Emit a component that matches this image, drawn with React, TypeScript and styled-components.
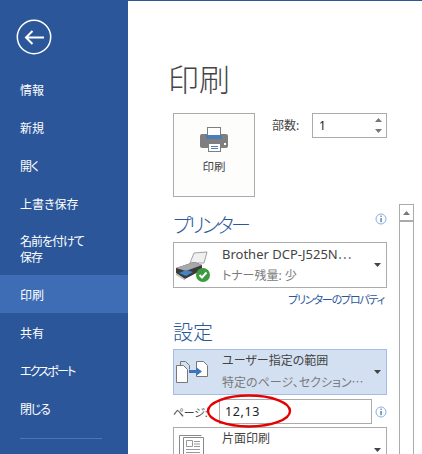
import React from "react";
import styled, { createGlobalStyle } from "styled-components";

const Global = createGlobalStyle`
    html, body { margin: 0; padding: 0; background: #fff; }
    body {
        font-family: "Noto Sans", "Noto Sans CJK JP", sans-serif;
        font-feature-settings: "palt";
    }
`;
const Page = styled.div`
    width: 422px;
    height: 454px;
    display: flex;
    overflow: hidden;
`;
const Sidebar = styled.nav`
    width: 128px;
    flex: none;
    background: #2b579a;
    color: #fff;
`;
const BackButton = styled.div`
    height: 70px;
    padding: 19px 0 0 16px;
    box-sizing: border-box;
`;
const MenuItem = styled.div<{ $active?: boolean; $tall?: boolean; $track?: number }>`
    height: ${(p) => (p.$tall ? 53 : 38)}px;
    box-sizing: border-box;
    padding: 3px 0 0 20px;
    display: flex;
    align-items: center;
    font-size: 12px;
    line-height: 16px;
    letter-spacing: ${(p) => p.$track ?? 0}px;
    background: ${(p) => (p.$active ? "#3e6db5" : "transparent")};
`;
const Divider = styled.div`
    width: 82px;
    height: 1px;
    margin: 11px 0 0 20px;
    background: #4a76b5;
`;
const Main = styled.main`
    flex: 1;
    border-top: 1px solid #2b579a;
    padding: 61px 0 0 45px;
    min-width: 0;
`;
const Title = styled.h1`
    margin: 0 0 0 -5px;
    font-size: 31px;
    font-weight: 300;
    line-height: 34px;
    color: #444;
`;
const PrintRow = styled.div`
    display: flex;
    margin-top: 17px;
`;
const PrintButton = styled.div`
    width: 82px;
    height: 84px;
    border: 1px solid #ababab;
    box-sizing: border-box;
    background-color: #fdfdfc;
    background-image: radial-gradient(#e9e9e6 0.6px, transparent 0.7px);
    background-size: 4px 4px;
    display: flex;
    flex-direction: column;
    align-items: center;
    padding-top: 12px;
    font-size: 11.5px;
    color: #444;
    gap: 5px;
`;
const CopiesLabel = styled.span`
    width: 40px;
    flex: none;
    margin: 5px 0 0 17px;
    font-size: 12px;
    line-height: 16px;
    color: #444;
`;
const CopiesInput = styled.div`
    width: 75px;
    height: 25px;
    border: 1px solid #ababab;
    box-sizing: border-box;
    padding: 0 4px 0 6px;
    display: flex;
    align-items: center;
    justify-content: space-between;
    font-size: 12px;
    color: #222;
`;
const Spinner = styled.div`
    display: flex;
    flex-direction: column;
    gap: 7px;
`;
const Columns = styled.div`
    display: flex;
    gap: 12px;
    margin-top: 7px;
`;
const Settings = styled.div`
    width: 214px;
    flex: none;
`;
const SectionHead = styled.div`
    display: flex;
    justify-content: space-between;
    align-items: flex-start;
    padding-top: 9px;
`;
const SectionTitle = styled.h2<{ $tight?: boolean }>`
    margin: 0 0 3px;
    font-size: 20px;
    font-weight: 300;
    line-height: 26px;
    letter-spacing: ${(p) => (p.$tight ? -3 : 0)}px;
    color: #2b579a;
`;
const Dropdown = styled.div<{ $selected?: boolean }>`
    height: 46px;
    border: 1px solid ${(p) => (p.$selected ? "#a3bde3" : "#ababab")};
    background: ${(p) => (p.$selected ? "#d3e0f2" : "#fff")};
    box-sizing: border-box;
    display: flex;
    align-items: center;
    padding-right: 5px;
`;
const DropdownIcon = styled.div`
    width: 47px;
    padding-left: 1px;
    flex: none;
    display: flex;
`;
const DropdownText = styled.div`
    flex: 1;
    min-width: 0;
`;
const Primary = styled.div`
    font-size: 12px;
    line-height: 22px;
    color: #444;
    white-space: nowrap;
`;
const PrinterName = styled(Primary)`
    font-size: 13px;
`;
const Secondary = styled.div`
    font-size: 12px;
    line-height: 22px;
    min-height: 22px;
    color: #7a7a7a;
    white-space: nowrap;
`;
const Link = styled.div`
    text-align: right;
    padding-right: 3px;
    margin-top: 3px;
    height: 20px;
    font-size: 11px;
    line-height: 18px;
    letter-spacing: -1.2px;
    color: #2b579a;
    white-space: nowrap;
`;
const PagesRow = styled.div`
    display: flex;
    align-items: center;
    margin: 4px 0 3px;
    height: 25px;
    position: relative;
`;
const PagesLabel = styled.span`
    width: 46px;
    flex: none;
    font-size: 11px;
    letter-spacing: -0.3px;
    color: #444;
`;
const PagesInput = styled.div`
    width: 153px;
    height: 25px;
    flex: none;
    border: 1px solid #ababab;
    box-sizing: border-box;
    padding-left: 5px;
    font-size: 12.5px;
    letter-spacing: 0.6px;
    line-height: 24px;
    color: #222;
`;
const InfoWrap = styled.div`
    margin-left: auto;
    display: flex;
`;
const Ellipse = styled.svg`
    position: absolute;
    left: 33px;
    top: -5px;
`;
const Scrollbar = styled.div`
    width: 15px;
    height: 260px;
    flex: none;
    border: 1px solid #ababab;
    border-bottom: none;
    box-sizing: border-box;
`;
const ScrollUp = styled.div`
    height: 15px;
    border-bottom: 2px solid #ababab;
    display: flex;
    justify-content: center;
    align-items: center;
`;

const Caret = () => (
    <svg width="7" height="4" viewBox="0 0 7 4">
        <path d="M0 0h7L3.5 4z" fill="#444" />
    </svg>
);
const Info = () => (
    <svg width="12" height="12" viewBox="0 0 12 12">
        <circle cx="6" cy="6" r="5" fill="#fff" stroke="#8eaede" />
        <rect x="5.4" y="2.6" width="1.3" height="1.3" fill="#3f73b8" />
        <rect x="5.4" y="5" width="1.3" height="4.2" fill="#3f73b8" />
    </svg>
);

const App = () => (
    <Page>
        <Global />
        <Sidebar>
            <BackButton>
                <svg width="37" height="37" viewBox="0 0 37 37">
                    <circle cx="18" cy="18" r="16.7" fill="none" stroke="#fff" strokeWidth="1.5" />
                    <path d="M10 18.500h18M16.500 12l-6.500 6.500 6.500 6.500" fill="none" stroke="#fff" strokeWidth="2" />
                </svg>
            </BackButton>
            <MenuItem>情報</MenuItem>
            <MenuItem>新規</MenuItem>
            <MenuItem $track={-1}>開く</MenuItem>
            <MenuItem>上書き保存</MenuItem>
            <MenuItem $tall $track={-1}>
                <div>名前を付けて<br />保存</div>
            </MenuItem>
            <MenuItem $active>印刷</MenuItem>
            <MenuItem>共有</MenuItem>
            <MenuItem $track={-1.8}>エクスポート</MenuItem>
            <MenuItem $track={-1.2}>閉じる</MenuItem>
            <Divider />
        </Sidebar>
        <Main>
            <Title>印刷</Title>
            <PrintRow>
                <PrintButton>
                    <svg width="28" height="27" viewBox="0 0 28 27">
                        <rect x="0" y="8" width="28" height="14" rx="2" fill="#7f7f7f" />
                        <rect x="7.5" y="1.5" width="13" height="8" fill="#fff" stroke="#7f7f7f" />
                        <rect x="6" y="9" width="16" height="4" fill="#4a7ebb" />
                        <rect x="8.5" y="17.500" width="12" height="8" fill="#fff" stroke="#7f7f7f" />
                        <path d="M11 20.500h7M11 22.500h7" stroke="#4a7ebb" />
                        <rect x="24" y="17" width="2" height="2" fill="#fff" />
                    </svg>
                    印刷
                </PrintButton>
                <CopiesLabel>部数:</CopiesLabel>
                <CopiesInput>
                    1
                    <Spinner>
                        <svg width="7" height="4" viewBox="0 0 7 4"><path d="M0 4h7L3.500 0z" fill="#777" /></svg>
                        <svg width="7" height="4" viewBox="0 0 7 4"><path d="M0 0h7L3.500 4z" fill="#777" /></svg>
                    </Spinner>
                </CopiesInput>
            </PrintRow>
            <Columns>
                <Settings>
                    <SectionHead>
                        <SectionTitle $tight>プリンター</SectionTitle>
                        <InfoWrap><Info /></InfoWrap>
                    </SectionHead>
                    <Dropdown>
                        <DropdownIcon>
                            <svg width="36" height="34" viewBox="0 0 36 34">
                                <path d="M15 15l4-10 13-1-3 11z" fill="#f0f0f0" stroke="#8a8a8a" strokeWidth=".8" />
                                <path d="M1 20l18-6 8 3v5L10 31 1 25z" fill="#3a3a3a" />
                                <path d="M1 20l18-6 8 3-16 6z" fill="#a8a8a8" />
                                <path d="M4 25l7-3 7 2-7 4z" fill="#3f86c8" />
                                <path d="M1 25l9 6v1.500L1 27z" fill="#bbb" />
                                <circle cx="28" cy="27" r="7" fill="#3d9a3d" />
                                <path d="M24.500 27l2.500 2.500 4.500-5" fill="none" stroke="#fff" strokeWidth="2" />
                            </svg>
                        </DropdownIcon>
                        <DropdownText>
                            <PrinterName>Brother DCP-J525N⋯</PrinterName>
                            <Secondary>トナー残量: 少</Secondary>
                        </DropdownText>
                        <Caret />
                    </Dropdown>
                    <Link>プリンターのプロパティ</Link>
                    <SectionHead>
                        <SectionTitle>設定</SectionTitle>
                    </SectionHead>
                    <Dropdown $selected>
                        <DropdownIcon>
                            <svg width="34" height="24" viewBox="0 0 34 24">
                                <path d="M1.500 5.500h7l4 4v13h-11z" fill="#fff" stroke="#777" />
                                <path d="M5.500 5V1.500h5l4 4v4" fill="none" stroke="#777" />
                                <path d="M21.500 1.500h7l4 4v11h-11z" fill="#fff" stroke="#777" />
                                <path d="M14 11.500h10" stroke="#3f73b8" strokeWidth="3" fill="none" />
                                <path d="M21 7l6 4.500-6 4.500z" fill="#3f73b8" />
                            </svg>
                        </DropdownIcon>
                        <DropdownText>
                            <Primary>ユーザー指定の範囲</Primary>
                            <Secondary>特定のページ、セクション⋯</Secondary>
                        </DropdownText>
                        <Caret />
                    </Dropdown>
                    <PagesRow>
                        <PagesLabel>ページ:</PagesLabel>
                        <PagesInput>12,13</PagesInput>
                        <InfoWrap><Info /></InfoWrap>
                        <Ellipse width="86" height="34" viewBox="0 0 86 34">
                            <ellipse cx="43" cy="17" rx="41" ry="15.5" fill="none" stroke="#e60000" strokeWidth="2.4" />
                        </Ellipse>
                    </PagesRow>
                    <Dropdown>
                        <DropdownIcon>
                            <svg width="30" height="32" viewBox="0 0 30 32">
                                <path d="M4.500 32V1.500h22" fill="none" stroke="#888" />
                                <path d="M8.500 32V3.500h20V32" fill="#fff" stroke="#888" />
                                <path d="M11.500 6.500h6v6h-6zM19 7.500h6M19 10h6M19 12.500h6M11 15.500h14M11 18.500h14" fill="none" stroke="#999" />
                            </svg>
                        </DropdownIcon>
                        <DropdownText>
                            <Primary>片面印刷</Primary>
                            <Secondary />
                        </DropdownText>
                        <Caret />
                    </Dropdown>
                </Settings>
                <Scrollbar>
                    <ScrollUp>
                        <svg width="7" height="4" viewBox="0 0 7 4"><path d="M0 4h7L3.500 0z" fill="#777" /></svg>
                    </ScrollUp>
                </Scrollbar>
            </Columns>
        </Main>
    </Page>
);

export default App;
